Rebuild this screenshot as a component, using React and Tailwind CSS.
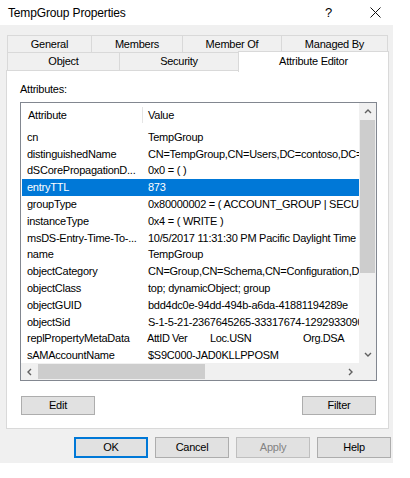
import React from 'react'

const rows = [
  ['cn', 'TempGroup'],
  ['distinguishedName', 'CN=TempGroup,CN=Users,DC=contoso,DC=com'],
  ['dSCorePropagationD...', '0x0 = ( )'],
  ['entryTTL', '873', true],
  ['groupType', '0x80000002 = ( ACCOUNT_GROUP | SECURITY_ENABLED )'],
  ['instanceType', '0x4 = ( WRITE )'],
  ['msDS-Entry-Time-To-...', '10/5/2017 11:31:30 PM Pacific Daylight Time'],
  ['name', 'TempGroup'],
  ['objectCategory', 'CN=Group,CN=Schema,CN=Configuration,DC=contoso,DC=com'],
  ['objectClass', 'top; dynamicObject; group'],
  ['objectGUID', 'bdd4dc0e-94dd-494b-a6da-41881194289e'],
  ['objectSid', 'S-1-5-21-2367645265-33317674-1292933090-1110'],
  ['replPropertyMetaData', 'META'],
  ['sAMAccountName', '$S9C000-JAD0KLLPPOSM'],
]

const Chevron = ({ dir }) => {
  const pts = {
    up: '1,5 4,2 7,5',
    down: '1,2 4,5 7,2',
    left: '5,1 2,4 5,7',
    right: '2,1 5,4 2,7',
  }[dir]
  const horiz = dir === 'left' || dir === 'right'
  return (
    <svg width={horiz ? 7 : 8} height={horiz ? 8 : 7} viewBox={horiz ? '0 0 7 8' : '0 0 8 7'}>
      <polyline points={pts} fill="none" stroke="#606060" strokeWidth="1.4" />
    </svg>
  )
}

const Tab = ({ w, first, children }) => (
  <div
    className={`h-full border border-[#d9d9d9] bg-[#f0f0f0] flex items-center justify-center ${first ? '' : '-ml-px'}`}
    style={{ width: w }}
  >
    {children}
  </div>
)

const Button = ({ children, className = '' }) => (
  <div className={`w-[74px] flex items-center justify-center border bg-[#e1e1e1] ${className}`}>
    {children}
  </div>
)

export default function App() {
  return (
    <div className="w-[410px] h-[478px] bg-white text-black font-['Liberation_Sans',Arial,sans-serif] text-[11px] tracking-[-0.25px] leading-[13px]">
      {/* title bar */}
      <div className="h-[25px] flex items-center">
        <span className="pl-[8px] text-[12px] tracking-[-0.15px] leading-[14px]">TempGroup Properties</span>
        <span className="ml-auto text-[13px] leading-[14px] mr-[38px]">?</span>
        <svg width="11" height="11" viewBox="0 0 11 11" className="mr-[29px]">
          <path d="M0.5 0.5 L10.5 10.5 M10.5 0.5 L0.5 10.5" stroke="#111" strokeWidth="1" />
        </svg>
      </div>

      <div className="w-[393px] h-[438px] bg-[#f0f0f0] pt-[10px]">
        {/* tab rows */}
        <div className="ml-[7px] flex h-[18px]">
          <Tab w={85} first>General</Tab>
          <Tab w={92}>Members</Tab>
          <Tab w={100}>Member Of</Tab>
          <Tab w={107}>Managed By</Tab>
        </div>
        <div className="ml-[7px] -mt-px flex items-end h-[19px] relative z-10">
          <Tab w={113} first>Object</Tab>
          <Tab w={120}>Security</Tab>
          <div className="-ml-px w-[151px] h-[21px] mb-[-1px] border border-b-0 border-[#d9d9d9] bg-white flex justify-center pt-[3px]">
            Attribute Editor
          </div>
        </div>

        {/* panel */}
        <div className="ml-[6px] -mt-px w-[383px] h-[359px] border border-[#d9d9d9] bg-white">
          <div className="ml-[13px] mt-[12px] h-[13px]">Attributes:</div>

          <div className="ml-[13px] mt-[6px] w-[357px] h-[279px] border border-[#828790] flex flex-col">
            <div className="h-[260px] flex">
              <div className="flex-1 overflow-hidden">
                <div className="h-[24px] flex items-center">
                  <div className="w-[122px] pl-[7px] h-[16px] flex items-center border-r border-[#e5e5e5]">Attribute</div>
                  <div className="pl-[5px]">Value</div>
                </div>
                <div className="mt-[2px]">
                  {rows.map(([name, value, sel]) => (
                    <div
                      key={name}
                      className={`h-[16.8px] flex items-center whitespace-nowrap ${sel ? 'bg-[#0078d7] text-white ml-px' : ''}`}
                    >
                      <div className={`${sel ? 'w-[126px] pl-[5px]' : 'w-[127px] pl-[6px]'} shrink-0 overflow-hidden`}>{name}</div>
                      {value === 'META' ? (
                        <div className="flex shrink-0 -ml-px tracking-[-0.4px]">
                          <span className="w-[25px]">AttID</span>
                          <span className="w-[38px]">Ver</span>
                          <span className="w-[93px]">Loc.USN</span>
                          <span>Org.DSA</span>
                        </div>
                      ) : (
                        <div className="shrink-0">{value}</div>
                      )}
                    </div>
                  ))}
                </div>
              </div>
              {/* vertical scrollbar */}
              <div className="w-[17px] bg-[#f0f0f0] flex flex-col">
                <div className="h-[17px] flex items-center justify-center">
                  <Chevron dir="up" />
                </div>
                <div className="flex-1 px-px">
                  <div className="h-[153px] bg-[#cdcdcd]" />
                </div>
                <div className="h-[17px] flex items-center justify-center">
                  <Chevron dir="down" />
                </div>
              </div>
            </div>
            {/* horizontal scrollbar */}
            <div className="h-[17px] flex">
              <div className="flex-1 bg-[#f0f0f0] flex">
                <div className="w-[17px] flex items-center justify-center">
                  <Chevron dir="left" />
                </div>
                <div className="flex-1 py-px">
                  <div className="w-[167px] h-full bg-[#cdcdcd]" />
                </div>
                <div className="w-[17px] flex items-center justify-center">
                  <Chevron dir="right" />
                </div>
              </div>
              <div className="w-[17px] bg-[#f0f0f0]" />
            </div>
          </div>

          <div className="ml-[14px] mt-[15px] w-[355px] flex justify-between">
            <Button className="h-[19px] border-[#adadad]">Edit</Button>
            <Button className="h-[19px] border-[#adadad]">Filter</Button>
          </div>
        </div>

        {/* dialog buttons */}
        <div className="ml-[74px] mt-[8px] flex gap-[7px]">
          <Button className="h-[21px] border-2 border-[#0078d7]">OK</Button>
          <Button className="h-[21px] border-[#adadad]">Cancel</Button>
          <Button className="h-[21px] border-[#bfbfbf] bg-[#cccccc] text-[#838383]">Apply</Button>
          <Button className="h-[21px] border-[#adadad]">Help</Button>
        </div>
      </div>
    </div>
  )
}
